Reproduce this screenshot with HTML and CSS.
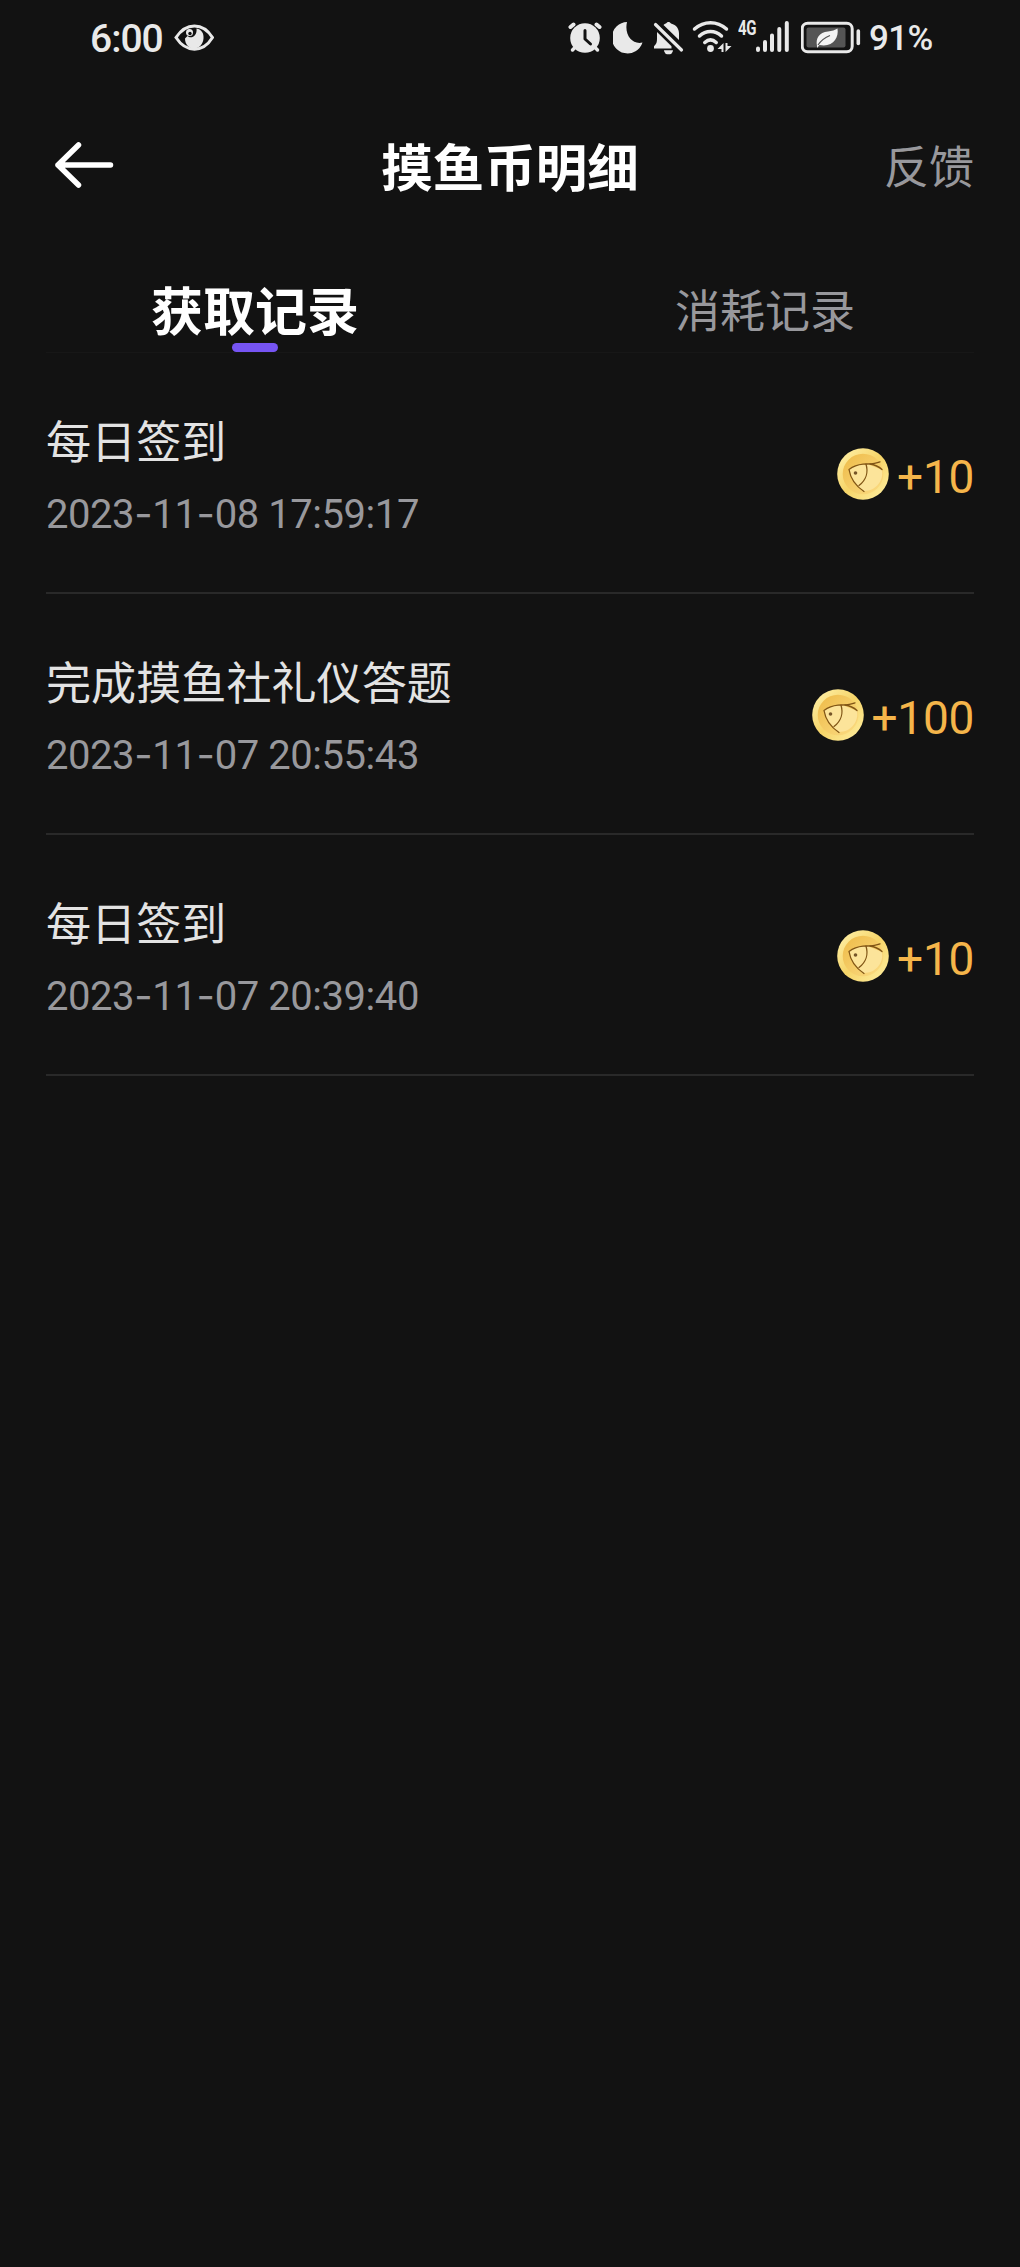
FILE: index.html
```html
<!DOCTYPE html>
<html lang="zh-CN">
<head>
<meta charset="utf-8">
<title>摸鱼币明细</title>
<link rel="stylesheet" href="styles.css">
</head>
<body>
<svg class="defs" aria-hidden="true">
  <defs>
    <linearGradient id="rim" x1="0" y1="0" x2="1" y2="1">
      <stop offset="0" stop-color="#fff3ae"/><stop offset=".5" stop-color="#f6d468"/><stop offset="1" stop-color="#fff0a4"/>
    </linearGradient>
    <linearGradient id="face" x1="0" y1="0" x2="1" y2="1">
      <stop offset="0" stop-color="#eebb48"/><stop offset="1" stop-color="#fbdc84"/>
    </linearGradient>
    <symbol id="coin" viewBox="0 0 52 52">
      <circle cx="26" cy="26" r="25.8" fill="url(#rim)"/>
      <circle cx="26" cy="26" r="20.3" fill="url(#face)"/>
      <path d="M12 21.5C17 17.5 23 16.4 31 16.2L45 22C47 32 39 43 27 43C19 37 14.500 31 12 21.500Z" fill="#fce49a"/>
      <g fill="none" stroke="#805516" stroke-width="1.300" stroke-linecap="round" stroke-linejoin="round">
        <path d="M43 13.800C37 16.300 31 15.800 26 16.200C20 16.800 16 18.500 12 21.500C13.500 31 18 37.500 27 43.500"/>
        <path d="M29 16.200C31.500 24 29 32 22 37.500M33 16C38 16.800 42 18.800 45 21.500"/>
      </g>
      <circle cx="18.500" cy="25" r="1.800" fill="#755529"/>
    </symbol>
  </defs>
</svg>

<div class="status">
  <span class="time">6:00</span>
  <svg class="eye" width="40" height="36" viewBox="174 20 40 36">
    <path d="M176 37.500C186 22 203 22 212.500 37.500C203 53 186 53 176 37.500Z" fill="none" stroke="#e9e9e9" stroke-width="3"/>
    <path d="M196.500 28.500C202 29.500 204 34 203.500 38.500C203 44.500 199 48.500 194 48.500C188.500 48.500 185 44 185 38.500L187.500 36C191 39.500 197.500 36 196.500 28.500Z" fill="#e9e9e9"/>
    <circle cx="189.500" cy="32.500" r="3.500" fill="#e9e9e9"/>
    <circle cx="190" cy="33.500" r="1.700" fill="#121212"/>
  </svg>
  <div class="indicators">
    <svg width="34" height="36" viewBox="568 20 34 36">
      <g stroke="#e9e9e9" stroke-width="4" stroke-linecap="round">
        <path d="M570.500 27L573.500 24.500M599.500 27L596.500 24.500" /><path d="M572.500 50L576 46.500M597.500 50L594 46.500" stroke-width="3.500"/>
      </g>
      <circle cx="585" cy="38" r="14.800" fill="#e9e9e9"/>
      <path d="M585 30.500V39L590.500 44" fill="none" stroke="#121212" stroke-width="3" stroke-linecap="round" stroke-linejoin="round"/>
    </svg>
    <svg class="moon" width="30" height="36" viewBox="613 20 30 36">
      <path d="M627 22A15.700 15.700 0 1 0 642.500 42.500C632.500 45 624 35 627 22Z" fill="#e9e9e9"/>
    </svg>
    <svg class="bell" width="31" height="36" viewBox="653 20 31 36">
      <path d="M654 46.200C656.500 44 657 42 657 39V32L671.500 46.200V48.500H654Z" fill="#e9e9e9"/>
      <path d="M663.500 25C664.500 24 666 23.600 666 23.600C667 21.500 670 21.500 671 23.600C676.500 25 679 29 679 33.500V40Z" fill="#e9e9e9"/>
      <path d="M664 50.300H673A4.500 4 0 0 1 664 50.300Z" fill="#e9e9e9"/>
      <path d="M655.500 24.500L681.500 50" stroke="#e9e9e9" stroke-width="3.200" stroke-linecap="round"/>
    </svg>
    <svg class="wifi" width="40" height="36" viewBox="692 20 40 36">
      <g fill="none" stroke="#e9e9e9" stroke-width="3.500" stroke-linecap="round">
        <path d="M694.500 29C704 20.500 717 20.500 726.500 29"/><path d="M699.500 36C706 30 715 30 721.500 36"/><path d="M704.800 42.500C708.500 39 712.500 39 716.200 42.500"/>
      </g>
      <circle cx="710.500" cy="48.500" r="3.400" fill="#e9e9e9"/>
      <path d="M723.500 43V52H721.500V49L717.500 49ZM725.500 52V43H727.500V46H731.500Z" fill="#e9e9e9"/>
    </svg>
    <span class="network">4G</span>
    <svg class="signal" width="34" height="36" viewBox="756 20 34 36">
      <path d="M758 48.500V50M765 42V50M772 35.500V50M779.300 29V50M786.800 23V50" stroke="#e9e9e9" stroke-width="4" stroke-linecap="round"/>
    </svg>
    <svg class="battery" width="60" height="36" viewBox="801 20 60 36">
      <rect x="802.200" y="23.200" width="50" height="28.500" rx="5.500" fill="none" stroke="#e9e9e9" stroke-width="3"/>
      <rect x="806.500" y="27.500" width="39" height="20" rx="2" fill="#555"/>
      <path d="M858.300 31V43.500" stroke="#e9e9e9" stroke-width="3.600" stroke-linecap="round"/>
      <path d="M817 46C815.500 38 819 32.500 828 31.500C832 31 835 30 837.500 28.500C839 38 833 47.500 819.500 45L817 48Z" fill="#f4f4f4"/>
      <path d="M818 45C821 40.500 825 37.500 830 35.500" fill="none" stroke="#555" stroke-width="1.200"/>
    </svg>
    <span class="percent">91%</span>
  </div>
</div>

<header class="header">
  <svg class="back" width="62" height="50" viewBox="0 0 62 50">
    <path d="M57.500 25H5M25.500 5L5 25L25.500 45" fill="none" stroke="#fff" stroke-width="5.500" stroke-linecap="round" stroke-linejoin="round"/>
  </svg>
  <h1 class="title">摸鱼币明细</h1>
  <a class="feedback">反馈</a>
</header>

<nav class="tabs">
  <a class="tab active">获取记录</a>
  <a class="tab">消耗记录</a>
</nav>

<main class="list">
  <section class="row">
    <div class="info">
      <div class="name">每日签到</div>
      <div class="date">2023<span class="dash">-</span>11<span class="dash">-</span>08 17:59:17</div>
    </div>
    <div class="amount"><svg class="coin"><use href="#coin"/></svg><span class="value">+10</span></div>
  </section>
  <section class="row">
    <div class="info">
      <div class="name">完成摸鱼社礼仪答题</div>
      <div class="date">2023<span class="dash">-</span>11<span class="dash">-</span>07 20:55:43</div>
    </div>
    <div class="amount"><svg class="coin"><use href="#coin"/></svg><span class="value">+100</span></div>
  </section>
  <section class="row">
    <div class="info">
      <div class="name">每日签到</div>
      <div class="date">2023<span class="dash">-</span>11<span class="dash">-</span>07 20:39:40</div>
    </div>
    <div class="amount"><svg class="coin"><use href="#coin"/></svg><span class="value">+10</span></div>
  </section>
</main>
</body>
</html>
```
FILE: styles.css
```css
* { box-sizing: border-box; }
body {
  margin: 0;
  min-height: 2267px;
  background: #121212;
  font-family: "Noto Sans CJK SC", sans-serif;
  color: #e3e3e3;
}
svg { display: block; flex: none; }
.defs { position: absolute; width: 0; height: 0; }

.status {
  display: flex;
  align-items: flex-start;
  justify-content: flex-start;
  height: 76px;
  padding: 20px 85px 0 90px;
  font-family: Roboto, sans-serif;
  white-space: nowrap;
  color: #e9e9e9;
}
.time { width: 84px; font-size: 39px; line-height: 38px; font-weight: 500; letter-spacing: -1px; }
.indicators { display: flex; flex: none; width: 367px; margin-left: 354px; }
.moon { margin-left: 11px; }
.bell { margin-left: 10px; }
.wifi { margin-left: 8px; }
.network {
  width: 18px;
  margin-left: 6px;
  font-size: 20px;
  line-height: 17px;
  font-weight: 700;
  letter-spacing: -0.500px;
  transform: scaleX(.75);
  transform-origin: left;
}
.battery { margin-left: 11px; }
.percent { margin-left: 8px; font-size: 35px; line-height: 38px; font-weight: 500; letter-spacing: -0.600px; }

.header {
  display: grid;
  grid-template-columns: 1fr auto 1fr;
  align-items: center;
  height: 177px;
  padding: 0 46px 0 53px;
}
.title { margin: 0 0 0 -7px; font-size: 51.500px; line-height: 70px; font-weight: 700; color: #fff; }
.feedback { justify-self: end; font-size: 45px; line-height: 60px; color: #98989c; }

.tabs { display: grid; grid-template-columns: 1fr 1fr; height: 99px; padding-top: 13px; }
.tab {
  position: relative;
  font-size: 45px;
  line-height: 86px;
  text-align: center;
  color: #98989c;
}
.tab.active { font-size: 52px; font-weight: 700; color: #fff; }
.tab.active::after {
  content: "";
  position: absolute;
  left: 50%;
  bottom: 0;
  width: 46px;
  height: 9px;
  margin-left: -23px;
  border-radius: 5px;
  background: #7654f3;
}

.list { margin: 0 46px; border-top: 1px solid #171717; }
.row {
  display: flex;
  justify-content: space-between;
  height: 241px;
  padding-top: 57px;
  border-bottom: 2px solid #292929;
}
.name { font-size: 45.100px; line-height: 60px; }
.date {
  margin-top: 15px;
  font-family: Roboto, sans-serif;
  font-size: 40px;
  line-height: 60px;
  letter-spacing: -0.440px;
  color: #98989c;
}
.dash { display: inline-block; width: 18.200px; font-family: Inter, sans-serif; line-height: 1; text-align: center; }
.amount { display: flex; align-items: flex-start; padding-top: 38px; }
.coin { width: 52px; height: 52px; }
.value {
  margin: -1px 0 0 8px;
  font-family: Roboto, sans-serif;
  font-size: 46px;
  line-height: 60px;
  letter-spacing: -0.300px;
  color: #f5b54a;
}
```
